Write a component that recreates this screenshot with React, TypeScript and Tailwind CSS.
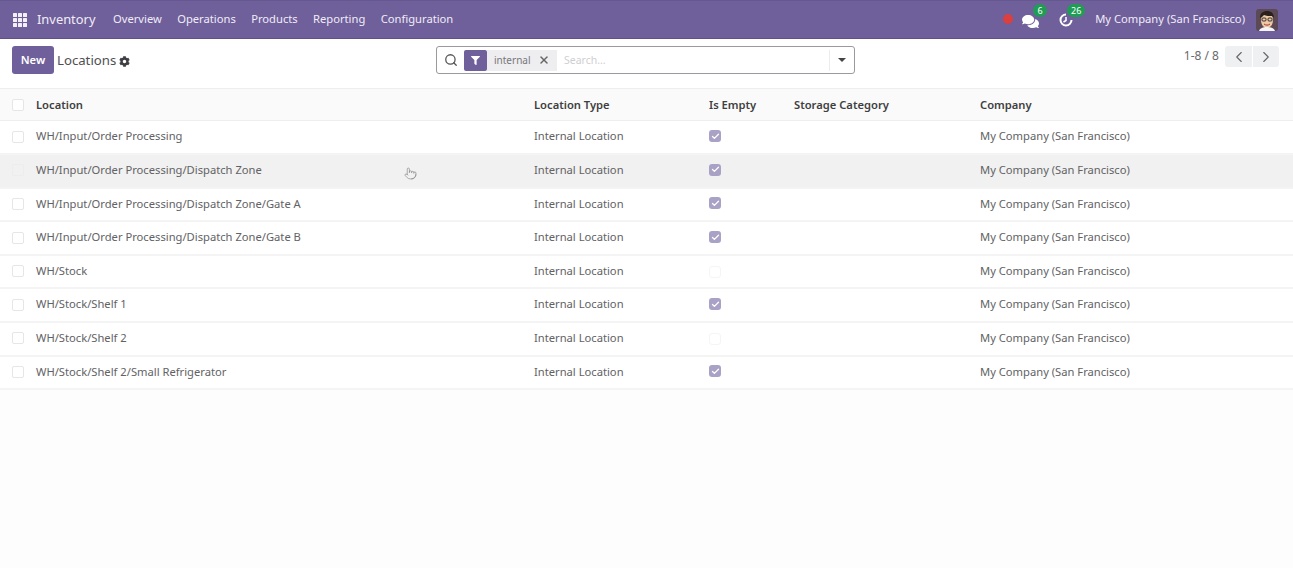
import { Search, X, ChevronLeft, ChevronRight, Check, Pointer } from "lucide-react";
import { FaCog, FaFilter, FaComments } from "react-icons/fa";

const rows: [string, boolean, boolean][] = [
  ["WH/Input/Order Processing", true, false],
  ["WH/Input/Order Processing/Dispatch Zone", true, true],
  ["WH/Input/Order Processing/Dispatch Zone/Gate A", true, false],
  ["WH/Input/Order Processing/Dispatch Zone/Gate B", true, false],
  ["WH/Stock", false, false],
  ["WH/Stock/Shelf 1", true, false],
  ["WH/Stock/Shelf 2", false, false],
  ["WH/Stock/Shelf 2/Small Refrigerator", true, false],
];

const menu = ["Overview", "Operations", "Products", "Reporting", "Configuration"];

function Avatar() {
  return (
    <svg viewBox="0 0 22 22" className="w-[22px] h-[22px] rounded-[3px]">
      <rect width="22" height="22" fill="#5b4a55" />
      <path d="M5 11c0-5 3-7 6-7s6 2 6 7c0 5-3 8-6 8s-6-3-6-8z" fill="#eec9a6" />
      <path d="M4 9c0-5 3-7 7-7s7 2 7 7l-2-2c-3 0-6 0-8-1L6 8z" fill="#2a211d" />
      <rect x="6" y="9" width="4" height="3" rx="1" fill="none" stroke="#222" strokeWidth="0.9" />
      <rect x="12" y="9" width="4" height="3" rx="1" fill="none" stroke="#222" strokeWidth="0.9" />
      <path d="M8 15c2 1.500 4 1.500 6 0" stroke="#a33" strokeWidth="1" fill="none" />
      <path d="M3 22c1-3 4-4 8-4s7 1 8 4z" fill="#f4f4f4" />
    </svg>
  );
}

export default function App() {
  return (
    <div className="w-[1293px] h-[568px] overflow-hidden bg-[#fdfdfd] text-[11.2px] text-[#626264] font-['Noto_Sans',sans-serif]">
      <header className="h-[39px] bg-[#6f5f9b] border-t border-b border-t-[#655790] border-b-[#5f5188] flex items-center text-[#f0edf6]">
        <div className="ml-[13px] w-[14px] h-[14px] grid grid-cols-3 gap-[1px]">
          {Array.from({ length: 9 }).map((_, i) => (
            <span key={i} className="bg-[#f3f0f8] rounded-[0.5px]" />
          ))}
        </div>
        <span className="ml-[10px] text-[12.9px]">Inventory</span>
        <nav className="ml-[17.5px] flex gap-[15.4px] text-[11.2px]">
          {menu.map((m) => (
            <span key={m}>{m}</span>
          ))}
        </nav>
        <div className="ml-auto flex items-center">
          <span className="w-[10px] h-[10px] rounded-full bg-[#d9403f] -mt-[2px]" />
          <span className="relative ml-[9px] w-[17px] h-[14px] flex">
            <FaComments size={17} className="text-white" />
            <span className="absolute -top-[9px] left-[11px] h-[13px] min-w-[14px] px-[2px] rounded-full bg-[#1f9d55] text-white text-[9px] leading-[13px] text-center">6</span>
          </span>
          <span className="relative ml-[19px] w-[16px] h-[16px] flex">
            <svg viewBox="0 0 16 16" className="w-[16px] h-[16px]" fill="none" stroke="#fff" strokeWidth="2">
              <path d="M8 2.500a5.500 5.500 0 1 0 5.500 5.500" />
              <path d="M8 5v3.500l-2.500 1.500" strokeWidth="1.500" />
            </svg>
            <span className="absolute -top-[8px] left-[9px] h-[13px] min-w-[18px] px-[2px] rounded-full bg-[#1f9d55] text-white text-[9px] leading-[13px] text-center">26</span>
          </span>
          <span className="ml-[21px] text-[11.2px]">My Company (San Francisco)</span>
          <span className="ml-[11px] mr-[15px] flex"><Avatar /></span>
        </div>
      </header>

      <div className="h-[49px] relative flex items-start pt-[7px] pl-[12px] pr-[14px] bg-white">
        <button className="w-[42px] h-[28px] rounded-[3px] bg-[#6f5f9b] text-white text-[11.2px] font-semibold">New</button>
        <span className="ml-[3px] mt-[5px] text-[13.2px] text-[#4f4f51]">Locations</span>
        <FaCog size={11} className="ml-[3px] mt-[10px] text-[#3f3f41]" />
        <div className="absolute left-[436px] top-[7px] w-[419px] h-[28px] flex items-center rounded-[3px] border border-[#9a9a9e] bg-white">
          <Search size={14} strokeWidth={2.200} className="ml-[7px] text-[#555]" />
          <span className="ml-[6px] w-[23px] h-[21px] rounded-[2px] bg-[#6f5f9b] flex items-center justify-center">
            <FaFilter size={9} className="text-white" />
          </span>
          <span className="h-[21px] w-[70px] bg-[#eeeef0] flex items-center pl-[7px] text-[10px] text-[#77777a]">
            internal
            <X size={12} strokeWidth={3} className="ml-[7px] text-[#666]" />
          </span>
          <span className="ml-[7px] mt-[1px] text-[10.5px] text-[#cfcfd2]">Search...</span>
          <span className="ml-auto h-[21px] w-[25px] border-l border-[#ececee] flex items-center justify-center">
            <span className="w-0 h-0 border-x-[4px] border-x-transparent border-t-[4px] border-t-[#444]" />
          </span>
        </div>
        <div className="ml-auto flex items-start">
          <span className="mr-[6px] mt-[1px] text-[12px] text-[#6a6a6c]">1-8 / 8</span>
          <span className="w-[27px] h-[21px] rounded-l-[3px] bg-[#eff0f1] flex items-center justify-center mr-[1px]">
            <ChevronLeft size={18} strokeWidth={1.500} className="text-[#666]" />
          </span>
          <span className="w-[26px] h-[21px] rounded-r-[3px] bg-[#eff0f1] flex items-center justify-center">
            <ChevronRight size={18} strokeWidth={1.500} className="text-[#666]" />
          </span>
        </div>
      </div>

      <table className="w-[1293px] table-fixed border-collapse">
        <colgroup>
          <col className="w-[36px]" />
          <col className="w-[498px]" />
          <col className="w-[175px]" />
          <col className="w-[85px]" />
          <col className="w-[186px]" />
          <col />
        </colgroup>
        <thead>
          <tr className="h-[32px] bg-[#fafafa] border-y border-[#eeeeef] text-left text-[#3f3f41]">
            <th className="pl-[12px]">
              <span className="block w-[12px] h-[12px] rounded-[2px] border border-[#e6e6e8] bg-white" />
            </th>
            <th className="font-semibold pt-[2px]">Location</th>
            <th className="font-semibold pt-[2px]">Location Type</th>
            <th className="font-semibold pt-[2px]">Is Empty</th>
            <th className="font-semibold pt-[2px]">Storage Category</th>
            <th className="font-semibold pt-[2px]">Company</th>
          </tr>
        </thead>
        <tbody>
          {rows.map(([name, empty, hover]) => (
            <tr key={name} className={`h-[33.6px] border-b-2 border-[#f4f4f5] ${hover ? "bg-[#f1f1f1]" : "bg-white"}`}>
              <td className="pl-[12px]">
                <span className={`block w-[12px] h-[12px] rounded-[2px] border -mt-[1px] ${hover ? "border-[#ededed]" : "border-[#e6e6e8]"}`} />
              </td>
              <td className="pb-[1px]">
                <div className="relative">
                  {name}
                  {hover && (
                    <Pointer size={13} strokeWidth={1.300} className="absolute left-[368px] top-[5px] text-[#8a8a8a]" />
                  )}
                </div>
              </td>
              <td className="pb-[1px]">Internal Location</td>
              <td>
                {empty ? (
                  <span className="flex w-[12px] h-[12px] rounded-[3px] bg-[#a9a2c6] items-center justify-center -mt-[2px]">
                    <Check size={9} strokeWidth={3.500} className="text-white" />
                  </span>
                ) : (
                  <span className="block w-[12px] h-[12px] rounded-[3px] border border-[#f5f5f6]" />
                )}
              </td>
              <td />
              <td className="pb-[1px]">My Company (San Francisco)</td>
            </tr>
          ))}
        </tbody>
      </table>
    </div>
  );
}
